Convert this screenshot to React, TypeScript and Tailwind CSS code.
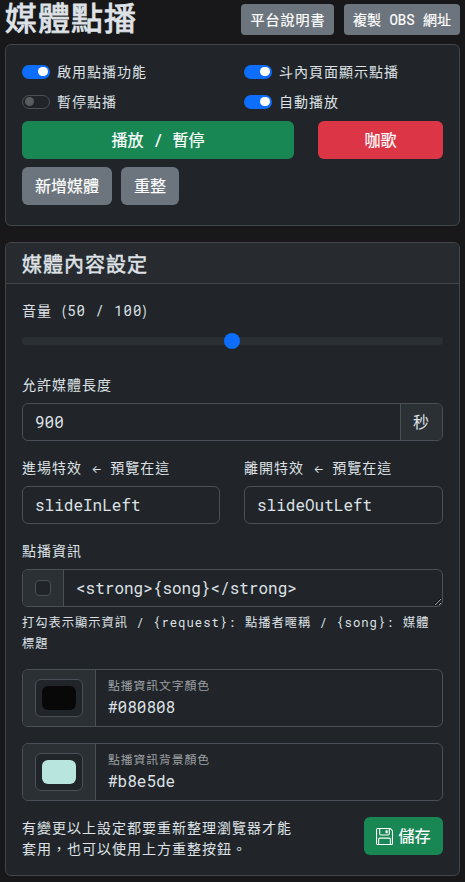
import type { ReactNode } from 'react';

function Switch({ label, on }: { label: string; on: boolean }) {
  return (
    <label className="flex h-[21px] items-center gap-[7px]">
      <span
        className={
          on
            ? 'flex h-[14px] w-7 items-center justify-end rounded-full bg-[#0d6efd] px-[2.5px]'
            : 'flex h-[14px] w-7 items-center rounded-full border border-[#495057] px-[1.5px]'
        }
      >
        <span className={on ? 'size-[9.5px] rounded-full bg-white' : 'size-[9.5px] rounded-full bg-[#595c5f]'} />
      </span>
      <span>{label}</span>
    </label>
  );
}

function Button({ children, className }: { children: ReactNode; className: string }) {
  return (
    <button className={`flex h-[38px] items-center justify-center rounded-md text-base tracking-normal whitespace-pre text-white [-webkit-text-stroke:0.2px_white] ${className}`}>
      {children}
    </button>
  );
}

function Effect({ label, value }: { label: string; value: string }) {
  return (
    <div>
      <div className="h-[21px] whitespace-pre">
        {label} <span className="inline-block w-[9.4px] font-['Inter',sans-serif] text-[11px] tracking-normal">←</span> 預覽在這
      </div>
      <div className="mt-2 flex h-[38px] items-center rounded-md border border-[#495057] px-3 text-base tracking-normal">
        {value}
      </div>
    </div>
  );
}

function ColorField({ label, value, swatch }: { label: string; value: string; swatch: string }) {
  return (
    <div className="mb-4 flex h-[58px] overflow-hidden rounded-md border border-[#495057]">
      <div className="flex w-[73px] shrink-0 items-center justify-center border-r border-[#495057] bg-[#2b3035]">
        <div className="flex h-[38px] w-12 items-center justify-center rounded-md border border-[#495057] bg-[#212529]">
          <div className={`h-6 w-[34px] rounded-md ${swatch}`} />
        </div>
      </div>
      <div className="pt-[7px] pl-3">
        <div className="text-[11.9px] leading-[18px] tracking-[0.85px] text-[#9ca0a4]">{label}</div>
        <div className="text-base leading-6 tracking-normal">{value}</div>
      </div>
    </div>
  );
}

export default function App() {
  return (
    <div className="h-[882px] w-[465px] overflow-hidden bg-[#18181a] pr-[5px] pl-[5px] font-['Roboto_Mono','DejaVu_Sans_Mono','Noto_Sans_CJK_TC',monospace] text-[14px] leading-[21px] tracking-[1px] text-[#dee2e6]">
      <header className="flex h-11 items-start justify-between">
        <h1 className="text-[32px] leading-[35px] [-webkit-text-stroke:0.9px_#dee2e6]">媒體點播</h1>
        <div className="flex gap-[10px] pt-1">
          <a className="flex h-[31px] w-[93px] items-center justify-center rounded bg-[#6c757d] pl-px text-white [-webkit-text-stroke:0.2px_white]">平台說明書</a>
          <button className="flex h-[31px] w-[116px] items-center justify-center rounded bg-[#6c757d] tracking-normal whitespace-pre text-white [-webkit-text-stroke:0.2px_white]">
            複製 OBS 網址
          </button>
        </div>
      </header>

      <section className="h-[182px] rounded-md border border-[#424649] bg-[#212529] px-4 pt-4">
        <div className="grid grid-cols-[198px_199px] gap-x-6 gap-y-[9px]">
          <Switch label="啟用點播功能" on />
          <Switch label="斗內頁面顯示點播" on />
          <Switch label="暫停點播" on={false} />
          <Switch label="自動播放" on />
        </div>
        <div className="mt-[9px] flex gap-6">
          <Button className="w-[272px] bg-[#198754]">播放 / 暫停</Button>
          <Button className="flex-1 bg-[#dc3545]">咖歌</Button>
        </div>
        <div className="mt-2 flex gap-[9px]">
          <Button className="w-[90px] bg-[#6c757d]">新增媒體</Button>
          <Button className="w-[58px] bg-[#6c757d]">重整</Button>
        </div>
      </section>

      <section className="mt-4 h-[634px] overflow-hidden rounded-md border border-[#424649] bg-[#212529]">
        <h2 className="flex h-[41px] items-center border-b border-[#424649] bg-[#272b2f] px-4 pt-px text-xl [-webkit-text-stroke:0.5px_#dee2e6]">媒體內容設定</h2>
        <div className="px-4 pt-4">
          <div className="h-[21px]">
            音量 <span className="font-['Noto_Sans_CJK_TC',sans-serif]">(</span>50 / 100<span className="font-['Noto_Sans_CJK_TC',sans-serif]">)</span>
          </div>
          <div className="mt-3 flex h-4 items-center">
            <div className="flex h-2 w-full items-center rounded-full bg-[#2b3035] pl-[202px]">
              <div className="size-4 shrink-0 rounded-full bg-[#0d6efd]" />
            </div>
          </div>

          <div className="mt-[25px] h-[21px]">允許媒體長度</div>
          <div className="mt-2 flex h-[38px] overflow-hidden rounded-md border border-[#495057] text-base">
            <div className="flex flex-1 items-center pl-3 tracking-normal">900</div>
            <div className="flex w-[42px] items-center border-l border-[#495057] bg-[#2b3035] pl-3">秒</div>
          </div>

          <div className="mt-4 grid grid-cols-[198px_199px] gap-6">
            <Effect label="進場特效" value="slideInLeft" />
            <Effect label="離開特效" value="slideOutLeft" />
          </div>

          <div className="mt-4 h-[21px]">點播資訊</div>
          <div className="mt-2 flex h-[38px] overflow-hidden rounded-md border border-[#495057]">
            <div className="flex w-[41px] items-center justify-center border-r border-[#495057] bg-[#2b3035]">
              <div className="size-4 rounded border border-[#495057] bg-[#212529]" />
            </div>
            <textarea
              className="h-9 flex-1 resize-y overflow-hidden bg-transparent px-3 py-1.5 text-base leading-6 tracking-normal outline-none [color-scheme:dark]"
              defaultValue="<strong>{song}</strong>"
            />
          </div>
          <div className="mt-[5px] h-[42px] w-[412px] text-[12.25px]">{'打勾表示顯示資訊 / {request}: 點播者暱稱 / {song}: 媒體標題'}</div>

          <div className="mt-[15px]">
            <ColorField label="點播資訊文字顏色" value="#080808" swatch="bg-[#080808]" />
            <ColorField label="點播資訊背景顏色" value="#b8e5de" swatch="bg-[#b8e5de]" />
          </div>

          <div className="flex items-start justify-between">
            <p className="w-[275px]">有變更以上設定都要重新整理瀏覽器才能套用，也可以使用上方重整按鈕。</p>
            <Button className="w-[79px] gap-[5px] bg-[#198754]">
              <svg width="17" height="17" viewBox="0 0 16 16" fill="currentColor">
                <path d="M11 2H9v3h2z" />
                <path d="M1.5 0h11.586a1.5 1.5 0 0 1 1.06.44l1.415 1.414A1.5 1.5 0 0 1 16 2.914V14.5a1.5 1.5 0 0 1-1.5 1.5h-13A1.5 1.5 0 0 1 0 14.5v-13A1.5 1.5 0 0 1 1.5 0M1 1.5v13a.5.5 0 0 0 .5.5H2v-4.5A1.5 1.5 0 0 1 3.500 9h9a1.5 1.5 0 0 1 1.5 1.5V15h.5a.5.5 0 0 0 .5-.5V2.914a.5.500 0 0 0-.146-.353l-1.415-1.415A.5.5 0 0 0 13.086 1H13v4.500A1.5 1.5 0 0 1 11.500 7h-7A1.5 1.5 0 0 1 3 5.500V1H1.500a.5.5 0 0 0-.5.5m3 4a.5.5 0 0 0 .5.5h7a.5.5 0 0 0 .5-.5V1H4zM3 15h10v-4.500a.5.5 0 0 0-.5-.5h-9a.5.5 0 0 0-.5.5z" />
              </svg>
              <span>儲存</span>
            </Button>
          </div>
        </div>
      </section>
    </div>
  );
}
